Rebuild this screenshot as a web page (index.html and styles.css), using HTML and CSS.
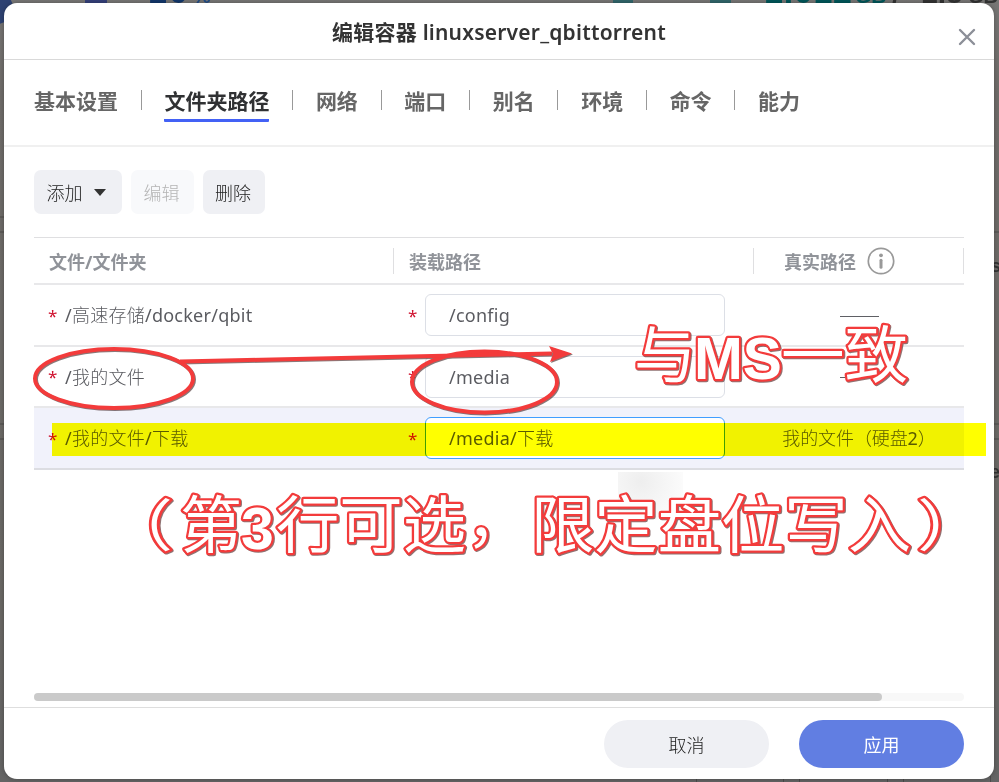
FILE: index.html
```html
<!DOCTYPE html>
<html lang="zh-CN">
<head>
<meta charset="utf-8">
<title>编辑容器</title>
<link rel="stylesheet" href="styles.css">
</head>
<body>
<svg class="backdrop" width="999" height="782" viewBox="0 0 999 782" aria-hidden="true">
  <defs>
    <linearGradient id="side" x1="0" y1="0" x2="0" y2="1">
      <stop offset="0" stop-color="#777675"/><stop offset=".12" stop-color="#6f6c69"/><stop offset=".8" stop-color="#6a6865"/><stop offset="1" stop-color="#646464"/>
    </linearGradient>
  </defs>
  <rect width="999" height="782" fill="url(#side)"/>
  <circle cx="-3" cy="8" r="16" fill="#2e4272"/>
  <rect x="85" y="0" width="22" height="3" fill="#35407a"/>
  <text x="148" y="3" font-size="34" fill="#12376b" textLength="40">10</text>
  <text x="193" y="3" font-size="20" fill="#214d88">%</text>
  <path d="M613 0h20v3h-20zM710 0h21v3h-21z" fill="#32666b"/>
  <text x="764" y="3" font-size="34" fill="#00575a" textLength="88">1.012</text>
  <text x="855" y="3" font-size="21" fill="#00575a">GB</text>
  <text x="892" y="3" font-size="28" fill="#333">/</text>
  <text x="921" y="3" font-size="30" fill="#333">1.8</text>
  <text x="968" y="3" font-size="21" fill="#333" textLength="30" lengthAdjust="spacingAndGlyphs">GB</text>
  <path d="M0 217h4M0 232h4M0 424h4M0 439h4M994 232h5M994 424h5M994 439h5M696.500 779v3M783.500 779v3M799.500 779v3M887.500 779v3M903.500 779v3M990.500 776v6" stroke="#4d4c4b"/>
  <text x="991" y="272" font-size="18" fill="#333">s</text>
  <text x="990" y="478" font-size="18" fill="#333">en</text>
</svg>

<main class="dialog">
  <header class="dialog-header">
    <h1>编辑容器 linuxserver_qbittorrent</h1>
    <svg class="close" width="18" height="18" viewBox="0 0 18 18"><path d="M2 2 16 16M16 2 2 16"/></svg>
  </header>
  <nav class="tabs">
    <a>基本设置</a><i></i><a class="active">文件夹路径</a><i></i><a>网络</a><i></i><a>端口</a><i></i><a>别名</a><i></i><a>环境</a><i></i><a>命令</a><i></i><a>能力</a>
  </nav>
  <section class="content">
    <div class="toolbar">
      <button class="add">添加<span class="caret"></span></button>
      <button class="disabled">编辑</button>
      <button>删除</button>
    </div>
    <div class="table">
      <div class="row head">
        <div class="cell">文件/文件夹</div>
        <div class="cell">装载路径</div>
        <div class="cell real">真实路径
          <svg class="info" width="28" height="28" viewBox="0 0 28 28"><circle cx="14" cy="14" r="12.700"/><path d="M14 13.300v7"/><circle class="dot" cx="14" cy="8.300" r="1.900"/></svg>
        </div>
      </div>
      <div class="row">
        <div class="cell"><b>*</b><span>/高速存储/docker/qbit</span></div>
        <div class="cell"><b>*</b><div class="field">/config</div></div>
        <div class="cell value"><i class="dash"></i></div>
      </div>
      <div class="row second">
        <div class="cell"><b>*</b><span>/我的文件</span></div>
        <div class="cell"><b>*</b><div class="field">/media</div></div>
        <div class="cell value"><i class="dash"></i></div>
      </div>
      <div class="row selected">
        <div class="cell"><b>*</b><span>/我的文件/下载</span></div>
        <div class="cell"><b>*</b><div class="field focus">/media/下载</div></div>
        <div class="cell value disk"><span>我的文件（硬盘2）</span></div>
      </div>
    </div>
    <div class="scrollbar"><div class="thumb"></div></div>
  </section>
  <footer>
    <button class="cancel">取消</button>
    <button class="apply">应用</button>
  </footer>
</main>

<div class="smudge"></div>
<div class="highlight"></div>
<svg class="notes" width="999" height="782" viewBox="0 0 999 782">
  <g class="strokes">
    <ellipse cx="114" cy="378.500" rx="79" ry="29.500"/>
    <ellipse cx="484.500" cy="382" rx="72.500" ry="30.500"/>
    <path d="M180 361.500 552 353.500"/>
    <path class="tip" d="M549 346 572 353.500 550 362 553 354z"/>
  </g>
  <g class="callout">
    <text x="634" y="378" font-size="62" textLength="62" lengthAdjust="spacingAndGlyphs">与</text>
    <text class="latin" x="694" y="379" font-size="60" textLength="88" lengthAdjust="spacingAndGlyphs">MS</text>
    <text x="781" y="378" font-size="62" textLength="127" lengthAdjust="spacingAndGlyphs">一致</text>
    <text x="103" y="546" font-size="56" textLength="70" lengthAdjust="spacingAndGlyphs">（</text>
    <text x="180" y="548" font-size="62" textLength="62" lengthAdjust="spacingAndGlyphs">第</text>
    <text class="latin" x="241" y="548.500" font-size="59" textLength="34">3</text>
    <text x="276" y="548" font-size="62" textLength="190" lengthAdjust="spacingAndGlyphs">行可选</text>
    <text x="466" y="542" font-size="62">，</text>
    <text x="531" y="548" font-size="62" textLength="380" lengthAdjust="spacingAndGlyphs">限定盘位写入</text>
    <text x="917" y="546" font-size="56" textLength="70" lengthAdjust="spacingAndGlyphs">）</text>
  </g>
</svg>
</body>
</html>
```
FILE: styles.css
```css
* { box-sizing: border-box; }
body {
  margin: 0;
  height: 782px;
  padding: 3px 5px 3px 4px;
  overflow: hidden;
  position: relative;
  background: #6c6a68;
  font-family: "Noto Sans", "Noto Sans CJK SC Light", "Noto Sans CJK SC", sans-serif;
  font-size: 18px;
  color: #5a5b60;
}
.backdrop, .notes { position: absolute; left: 0; top: 0; }
.backdrop text { font-family: "Liberation Sans", sans-serif; font-weight: 700; }
.dialog {
  position: relative;
  height: 776px;
  display: flex;
  flex-direction: column;
  background: #fff;
  border-radius: 13px;
  box-shadow: 0 0 5px rgba(0,0,0,.3);
}
.dialog-header {
  height: 57px;
  flex: none;
  display: flex;
  align-items: center;
  justify-content: center;
  position: relative;
  border-bottom: 1px solid #d9d9d9;
}
h1 { margin: 2px 0 0; font-family: "Noto Sans", "Noto Sans CJK SC", sans-serif; font-size: 21px; font-weight: 600; line-height: 30px; letter-spacing: .22px; color: #333; }
.close { position: absolute; right: 18px; top: 25px; fill: none; stroke: #8c8f98; stroke-width: 2.4; stroke-linecap: round; }
.tabs {
  height: 87px;
  flex: none;
  display: flex;
  align-items: flex-start;
  padding: 25px 30px 0;
  border-bottom: 2px solid #f0f0f0;
  font-family: "Noto Sans", "Noto Sans CJK SC", sans-serif;
  font-size: 21px;
  font-weight: 700;
  color: #666;
}
.tabs a { height: 37px; line-height: 33px; white-space: nowrap; }
.tabs .active { color: #303133; border-bottom: 3px solid #4361f5; border-radius: 0 0 1px 1px; }
.tabs i { width: 1px; height: 20px; margin: 5px 22.720px 0; background: #999; }
.content { flex: 1; padding: 23px 30px 0; display: flex; flex-direction: column; }
.toolbar { display: flex; gap: 9px; height: 44px; margin-bottom: 23px; }
button { border: 0; font: inherit; color: #222; background: #eff0f4; border-radius: 7px; padding: 0 2px 1px 0; width: 62px; }
button.add { width: 88px; display: flex; align-items: center; justify-content: center; gap: 11px; padding-right: 4px; }
button.disabled { background: #f8f9fb; color: #b5b5b5; width: 63px; }
.caret { margin-top: 2px; border: 6px solid transparent; border-top: 7px solid #333; border-bottom: 0; }
.table { border-top: 1px solid #dfdfe1; }
.row { display: grid; grid-template-columns: 360px 360px 210px; height: 62px; border-bottom: 2px solid #e8e8ea; }
.row.head { height: 47px; color: #909399; font-family: "Noto Sans", "Noto Sans CJK SC", sans-serif; font-weight: 700; }
.cell { display: flex; align-items: center; padding-left: 15px; white-space: nowrap; }
.head .cell { height: 26px; align-self: center; border-right: 1px solid #dfdfe1; }
.head .cell.real { padding-left: 30px; }
.info { margin-left: 11px; fill: none; stroke: #999; stroke-width: 1.700; }
.info path { stroke-width: 3; stroke-linecap: round; }
.info .dot { fill: #999; stroke: none; }
.cell b { width: 16px; font-weight: 400; font-size: 17px; color: #cf102d; position: relative; left: -1px; }
.cell span { padding-bottom: 2px; letter-spacing: .25px; }
.row.second { height: 61px; }
.row.selected { background: #f1f2fb; border-color: #dcdde2; }
.field { width: 300px; height: 42px; border: 1px solid #dcdfe6; border-radius: 6px; background: #fff; padding-left: 23px; line-height: 40px; letter-spacing: .25px; }
.field.focus { border-color: #409eff; }
.value { justify-content: center; padding-left: 0; }
.cell.disk span { letter-spacing: -.1px; }
.dash { width: 39px; height: 1px; margin-top: 2px; background: #5f6065; }
.scrollbar { margin-top: auto; margin-bottom: 6px; height: 8px; border-radius: 4px; background: #f8f8f8; }
.thumb { width: 848px; height: 8px; border-radius: 4px; background: #cacaca; }
footer { height: 72px; flex: none; display: flex; justify-content: flex-end; gap: 30px; padding: 12px 30px 0; border-top: 1px solid #dedede; }
footer button { width: 165px; height: 48px; border-radius: 24px; padding-right: 0; }
footer .apply { background: #617ee2; color: #fff; font-family: "Noto Sans CJK SC", sans-serif; }
.highlight { position: absolute; left: 52px; top: 423px; width: 934px; height: 33px; background: #ff0; mix-blend-mode: multiply; }
.smudge { position: absolute; left: 618px; top: 472px; width: 65px; height: 48px; background: radial-gradient(circle at 35% 20%, #eee, #fdfdfd 85%); }
.strokes { fill: none; stroke: #f33b3b; stroke-width: 4; filter: drop-shadow(1px 1px .5px rgba(60,30,30,.6)); }
.strokes .tip { fill: #f33b3b; stroke: none; }
.callout { font-family: "Noto Sans CJK SC", sans-serif; font-weight: 400; fill: #fff; stroke: #f33b3b; stroke-width: 4.500; stroke-linejoin: round; paint-order: stroke; filter: drop-shadow(1px 1px .5px rgba(70,20,20,.6)); }
.callout .latin { font-family: "Liberation Sans", sans-serif; font-weight: 700; }
```
